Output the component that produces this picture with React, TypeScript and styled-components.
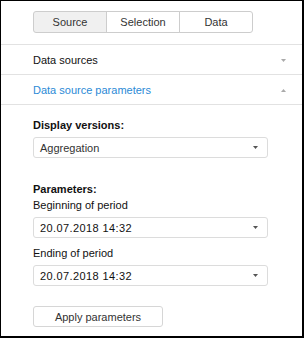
import styled, { createGlobalStyle } from "styled-components";

const GlobalStyle = createGlobalStyle`
  html, body {
    margin: 0;
    padding: 0;
    background: #ffffff;
  }
  * {
    box-sizing: border-box;
  }
`;

const Panel = styled.div`
  width: 304px;
  height: 338px;
  border-style: solid;
  border-color: #000;
  border-width: 1px 2px 2px 1px;
  background: #fff;
  font-family: "Liberation Sans", Arial, sans-serif;
  font-size: 11px;
  color: #222;
  overflow: hidden;
`;

const TabBar = styled.div`
  display: flex;
  padding: 10px 0 11px 32px;
`;

const Tab = styled.div<{ $active?: boolean }>`
  width: 74px;
  height: 22px;
  display: flex;
  align-items: center;
  justify-content: center;
  border: 1px solid #cdcdcd;
  margin-left: -1px;
  background: ${(p) => (p.$active ? "#f0f0f0" : "#fff")};
  color: #333;
  font-size: 11px;
  &:first-child {
    margin-left: 0;
    border-radius: 3px 0 0 3px;
  }
  &:last-child {
    border-radius: 0 3px 3px 0;
  }
`;

const Section = styled.div<{ $open?: boolean }>`
  height: 30px;
  padding: 1px 16px 0 32px;
  border-top: 1px solid #e2e2e2;
  display: flex;
  align-items: center;
  justify-content: space-between;
  color: ${(p) => (p.$open ? "#2b8ad6" : "#111")};
`;

const Body = styled.div`
  padding: 12px 34px 0 32px;
  border-top: 1px solid #e2e2e2;
`;

const Heading = styled.div<{ $gap?: number }>`
  font-weight: bold;
  line-height: 16px;
  margin-top: ${(p) => p.$gap ?? 0}px;
  color: #111;
`;

const Label = styled.div<{ $gap?: number }>`
  line-height: 16px;
  margin-top: ${(p) => p.$gap ?? 0}px;
  color: #111;
`;

const Select = styled.div`
  margin-top: 4px;
  height: 21px;
  border: 1px solid #dcdcdc;
  border-radius: 3px;
  display: flex;
  align-items: center;
  justify-content: space-between;
  padding: 0 9px 0 6px;
  color: #333;
`;

const DateValue = styled.span`
  color: #111;
  letter-spacing: 0.4px;
`;

const Button = styled.div`
  margin-top: 20px;
  width: 130px;
  height: 21px;
  border: 1px solid #d6d6d6;
  border-radius: 3px;
  display: flex;
  align-items: center;
  justify-content: center;
  color: #333;
`;

function Arrow({ up, color = "#555" }: { up?: boolean; color?: string }) {
  return (
    <svg width="5" height="3" viewBox="0 0 5 3">
      {up ? (
        <path d="M0 3 L2.5 0 L5 3 Z" fill={color} />
      ) : (
        <path d="M0 0 L5 0 L2.5 3 Z" fill={color} />
      )}
    </svg>
  );
}

export default function App() {
  return (
    <>
      <GlobalStyle />
      <Panel>
        <TabBar>
          <Tab $active>Source</Tab>
          <Tab>Selection</Tab>
          <Tab>Data</Tab>
        </TabBar>
        <Section>
          <span>Data sources</span>
          <Arrow color="#aaa" />
        </Section>
        <Section $open>
          <span>Data source parameters</span>
          <Arrow up color="#aaa" />
        </Section>
        <Body>
          <Heading>Display versions:</Heading>
          <Select>
            <span>Aggregation</span>
            <Arrow />
          </Select>
          <Heading $gap={23}>Parameters:</Heading>
          <Label>Beginning of period</Label>
          <Select>
            <DateValue>20.07.2018 14:32</DateValue>
            <Arrow />
          </Select>
          <Label $gap={7}>Ending of period</Label>
          <Select>
            <DateValue>20.07.2018 14:32</DateValue>
            <Arrow />
          </Select>
          <Button>Apply parameters</Button>
        </Body>
      </Panel>
    </>
  );
}
